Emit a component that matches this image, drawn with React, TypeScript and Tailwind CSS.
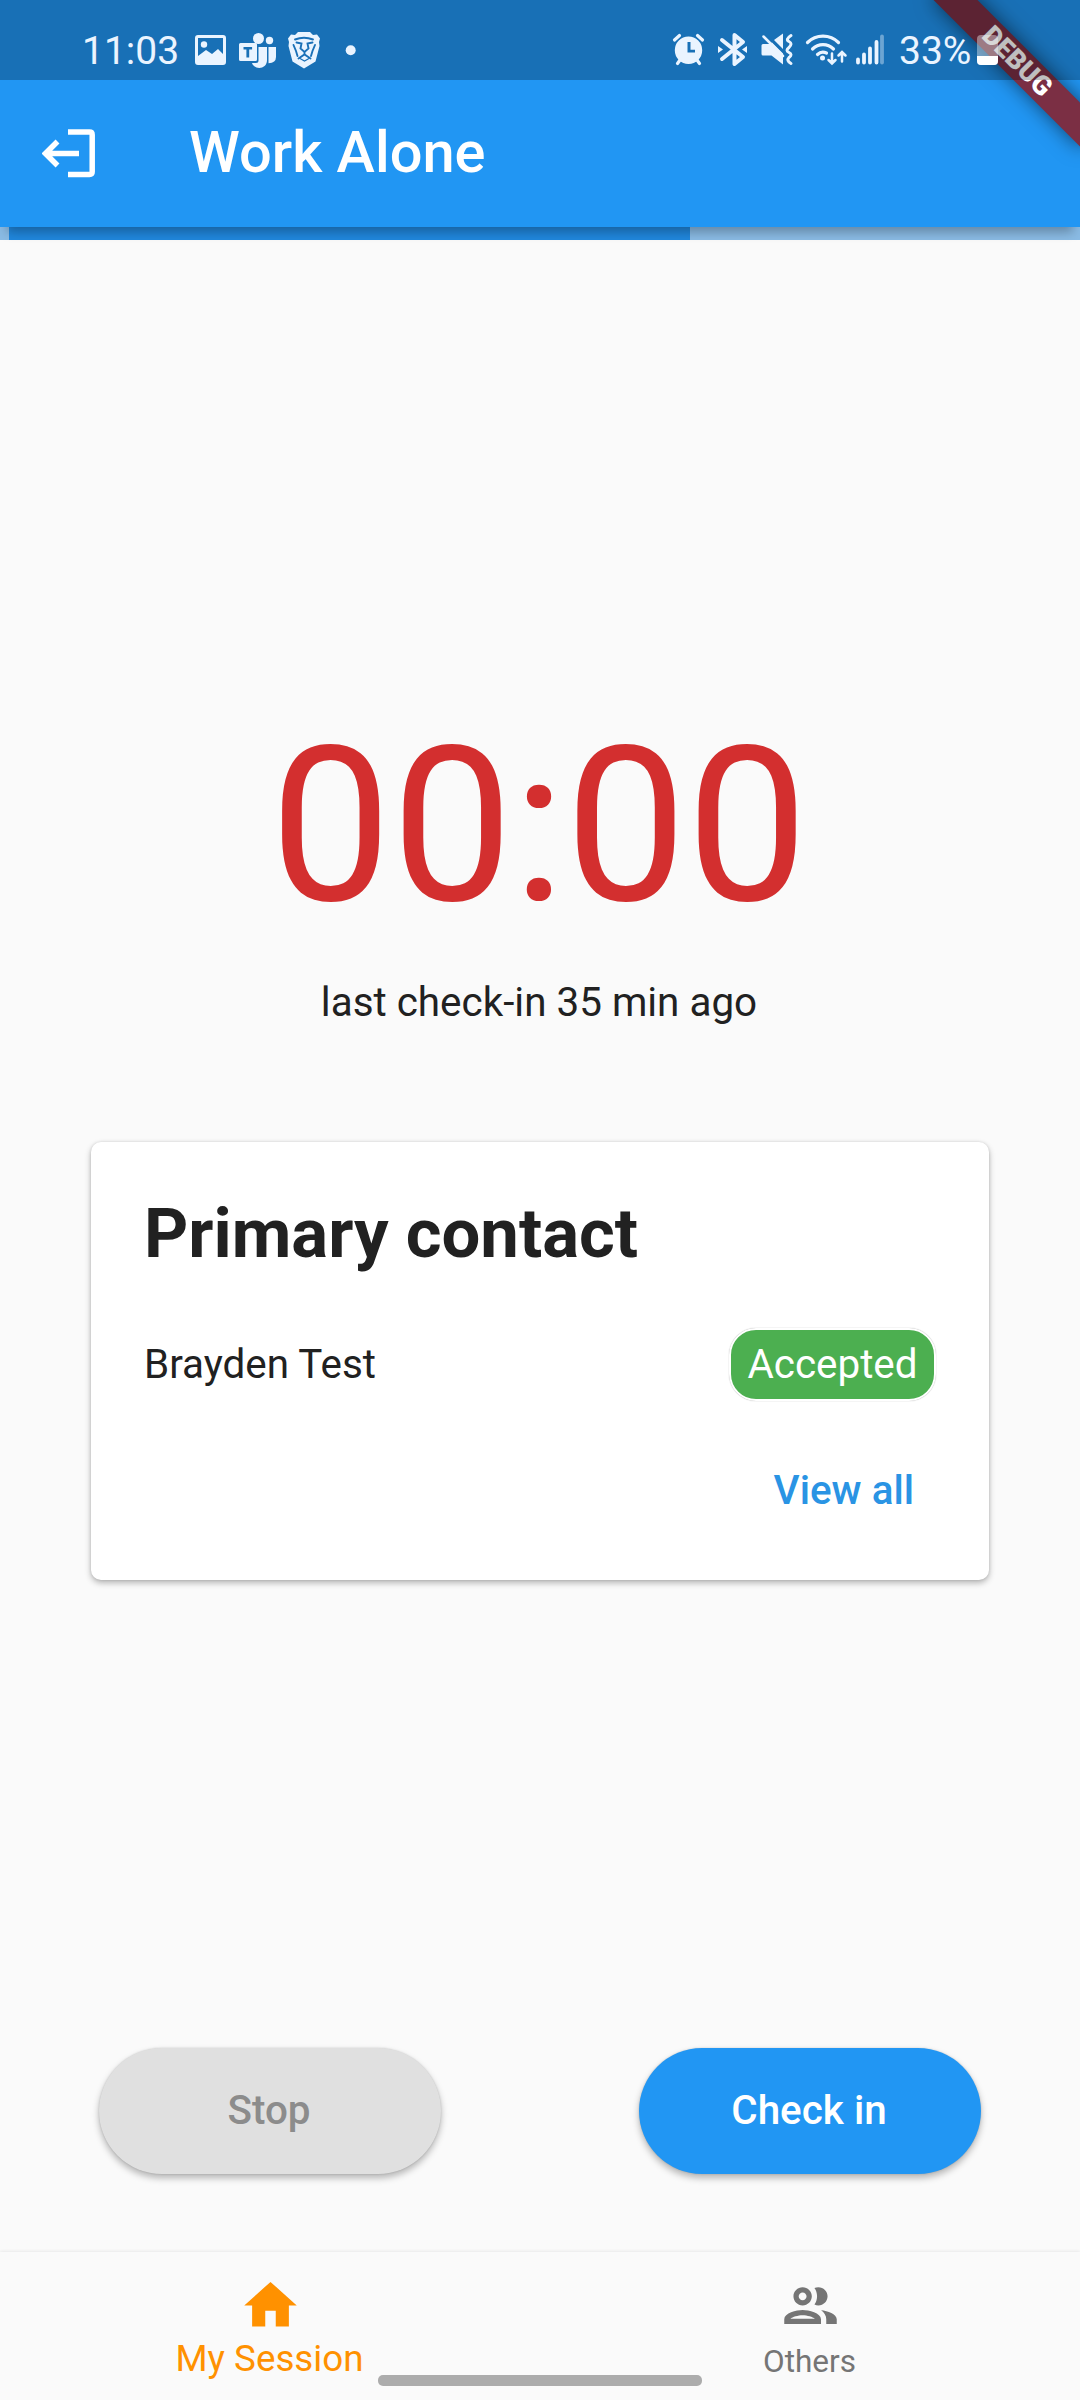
import type { ReactNode } from "react";
import { MdHome, MdOutlinePeople } from "react-icons/md";

const STATUS_TINT = "#eaf4ff";

function NotificationIcons() {
  return (
    <svg width="170" height="40" viewBox="190 30 170 40" fill={STATUS_TINT}>
      {/* gallery */}
      <path
        fillRule="evenodd"
        d="M198 35h25a3 3 0 0 1 3 3v24a3 3 0 0 1-3 3h-25a3 3 0 0 1-3-3V38a3 3 0 0 1 3-3zM198 38v18l8-6 6 4 6-5 5 5V38z"
      />
      <circle cx="204" cy="44.5" r="3.2" />
      {/* teams */}
      <circle cx="258.5" cy="38.5" r="5.5" />
      <circle cx="269.5" cy="40.5" r="3.7" />
      <path d="M258.5 47H267v13C267 70 254 70 252 63h4q2.5 0 2.5-2.5z" />
      <path d="M268.500 47H276v10q0 6-7.500 6.300z" />
      <path
        fillRule="evenodd"
        d="M240.500 43h15q1.500 0 1.500 1.500v15q0 1.500-1.500 1.500h-15q-1.500 0-1.500-1.500v-15q0-1.500 1.500-1.500zM243.500 47v2.500h2.900v8h2.800v-8h2.900V47z"
      />
      {/* brave */}
      <path d="M298 32h12l3 3 4-.5 3 4-1 3.500.5 4-4 15.500-11.500 7-11.500-7-4-15.500.5-4-1-3.500 3-4 4 .5z" />
      <g fill="none" stroke="#1a70b7" strokeWidth="1.900" strokeLinecap="round">
        <path d="M295 39.500q9-3.500 18 0M296.500 42.500l5 1-1 5 4 3.500 4-3.500-1-5 5-1M304.500 52v2M293.500 45l2.500 6 1.500 5M315 45l-2.500 6-1.500 5M298.500 58.500l6-4 6 4" />
        <path d="M300 58.500l4.500 2.500 4.500-2.500" strokeWidth="1.200" />
      </g>
      <circle cx="350.700" cy="50.300" r="5" />
    </svg>
  );
}

function SystemIcons() {
  return (
    <svg width="220" height="40" viewBox="670 30 220 40" fill={STATUS_TINT}>
      {/* alarm */}
      <path
        fillRule="evenodd"
        d="M688.500 36.500a13.700 13.700 0 1 1 0 27.400a13.700 13.700 0 1 1 0-27.400zM687.500 42v10.500h7.500v-2.800h-4.500V42z"
      />
      <g fill="none" stroke={STATUS_TINT} strokeWidth="3.200" strokeLinecap="round">
        <path d="M674.500 40l5-4.500M702.500 40l-5-4.500M680 60l-2.500 3.500M697 60l2.500 3.500" />
      </g>
      {/* bluetooth */}
      <path
        d="M722 40L743 57L734.500 64V35L743 42L722 59"
        fill="none"
        stroke={STATUS_TINT}
        strokeWidth="4"
        strokeLinejoin="round"
        strokeLinecap="round"
      />
      <path d="M718 46l5 3.500-5 3.500zM747 46l-5 3.500 5 3.500z" />
      {/* muted, vibrating */}
      <path d="M763 44h6l3-1.500L783 53.500V64.500l-11.500-9H763q-1.500 0-1.500-1.500v-8.500q0-1.500 1.500-1.500zM774 40l9-6.500V49z" />
      <g fill="none" stroke={STATUS_TINT} strokeLinecap="round" strokeLinejoin="round">
        <path d="M763.500 36.500L783 56" strokeWidth="2.500" />
        <path d="M791 35.500q-6 4 -2 6t0 6q-4 3 0 5t0 5q-3 3 2 6" strokeWidth="3" />
      </g>
      {/* wifi */}
      <g fill="none" stroke={STATUS_TINT} strokeWidth="3.200" strokeLinecap="round">
        <path d="M807.500 42.500a22 22 0 0 1 31 0M812.500 49a15 15 0 0 1 21 0M817.500 54.500a8 8 0 0 1 9-1.500" />
        <path
          d="M832 53.500v9.500M828.500 60l3.500 3.500 3.500-3.500M842 61.500V53M838.500 55.500L842 52l3.500 3.500"
          strokeWidth="2.500"
        />
      </g>
      <circle cx="822.500" cy="58" r="2.500" />
      {/* signal */}
      <g stroke={STATUS_TINT} strokeWidth="3.800" strokeLinecap="round">
        <path d="M858 59.500v3M864 54.500v8M870 48.500v14M876.500 42v20.500" />
        <path d="M882 36.500v26" opacity="0.400" />
      </g>
    </svg>
  );
}

function StatusBar() {
  return (
    <div className="absolute inset-x-0 top-0 z-30 flex h-20 bg-black/25 text-[39px] leading-[48px] text-[#eaf4ff]">
      <div className="flex pt-[27px] pl-[82px]">
        <span className="w-[108px]">11:03</span>
        <div className="pt-[3px]">
          <NotificationIcons />
        </div>
      </div>
      <div className="ml-auto flex pt-[27px] pr-[82px]">
        <div className="pt-[3px]">
          <SystemIcons />
        </div>
        <span className="ml-[9px] w-[78px]">33%</span>
        <div className="mt-2 h-[30px] w-[21px] overflow-hidden rounded-[4px] bg-white/40">
          <div className="mt-[21px] h-[9px] bg-white" />
        </div>
      </div>
    </div>
  );
}

function DebugBanner() {
  return (
    <div className="absolute top-0 right-0 z-20 h-60 w-60 overflow-hidden">
      <div className="absolute top-[47px] left-[73px] flex h-[31px] w-[210px] rotate-45 items-center justify-center bg-[#7b2f44] pr-[3px] text-[27px] leading-none font-black text-white shadow-[0_0_20px_rgba(0,0,0,0.55)]">
        DEBUG
      </div>
    </div>
  );
}

function AppBar() {
  return (
    <header className="relative z-10 flex h-[227px] items-center bg-[#2196f3] pt-20 shadow-[0_12px_10px_-7px_rgba(0,0,0,0.28)]">
      <svg
        className="mb-px ml-[42px]"
        width="54"
        height="50"
        viewBox="42 128 54 50"
        fill="none"
        stroke="white"
        strokeWidth="5.500"
      >
        <path d="M68 132h21.500q2.700 0 2.700 2.700v37q0 2.700-2.700 2.700H68" />
        <path d="M79 153.500H46M57.500 141.500l-12 12 12 12" />
      </svg>
      <h1 className="ml-[93px] pb-1 text-[57.750px] leading-[68px] font-medium text-white">Work Alone</h1>
    </header>
  );
}

function ContactCard() {
  return (
    <section className="mx-[91px] mt-[115px] h-[438px] rounded-[10px] bg-white px-[53px] pt-[51px] shadow-[0_3px_6px_rgba(0,0,0,0.28),0_0_3px_rgba(0,0,0,0.12)]">
      <h2 className="text-[68.800px] leading-[81px] font-bold">Primary contact</h2>
      <div className="mt-[54px] flex items-center justify-between">
        <span>Brayden Test</span>
        <span className="flex h-[73px] w-[207px] items-center justify-center rounded-[27px] border-[2.500px] border-white bg-[#4caf50] text-white shadow-[0_0_1px_rgba(0,0,0,0.4)]">
          Accepted
        </span>
      </div>
      <div className="mt-[66px] flex justify-end pr-[22px]">
        <button className="font-medium text-[#2a94e4]">View all</button>
      </div>
    </section>
  );
}

function PillButton({ children, className }: { children: ReactNode; className: string }) {
  return (
    <div className="flex flex-1 justify-center">
      <button
        className={`h-[126px] w-[342px] rounded-full pr-[2px] font-medium shadow-[0_4px_7px_rgba(0,0,0,0.28),0_0_2px_rgba(0,0,0,0.15)] ${className}`}
      >
        {children}
      </button>
    </div>
  );
}

function BottomNav() {
  return (
    <nav className="relative mt-auto flex h-[148px] bg-[#fafafa] shadow-[0_-1px_3px_rgba(0,0,0,0.07)]">
      <div className="flex flex-1 flex-col items-center pt-[22px] text-[#ff9100]">
        <MdHome size={63} />
        <span className="pr-px text-[36.750px] leading-[43px]">My Session</span>
      </div>
      <div className="flex flex-1 flex-col items-center pt-[22px] text-[#757575]">
        <MdOutlinePeople size={63} />
        <span className="mt-[3px] pr-px text-[31.500px] leading-[43px]">Others</span>
      </div>
      {/* gesture handle */}
      <div className="absolute top-[123px] left-[378px] h-[11px] w-[324px] rounded-[5px] bg-[#acacac]" />
    </nav>
  );
}

export default function App() {
  return (
    <div className="relative flex h-[2400px] w-[1080px] flex-col overflow-hidden bg-[#fafafa] font-[Roboto,sans-serif] text-[40.400px] leading-[48px] text-[#212121]">
      <StatusBar />
      <DebugBanner />
      <AppBar />
      <div className="flex h-[13px] bg-[#8abbe4] pl-[9px]">
        <div className="w-[681px] bg-[#2087dd]" />
      </div>
      <main className="flex flex-col">
        <div className="mt-[460px] pr-[2px] text-center text-[216px] leading-[253px] text-[#d32f2f]">00:00</div>
        <p className="mt-[26px] pr-[2px] text-center">last check-in 35 min ago</p>
        <ContactCard />
        <div className="mt-[468px] flex">
          <PillButton className="bg-[#e0e0e0] text-[#8c8c8c]">Stop</PillButton>
          <PillButton className="bg-[#2196f3] text-white">Check in</PillButton>
        </div>
      </main>
      <BottomNav />
    </div>
  );
}
